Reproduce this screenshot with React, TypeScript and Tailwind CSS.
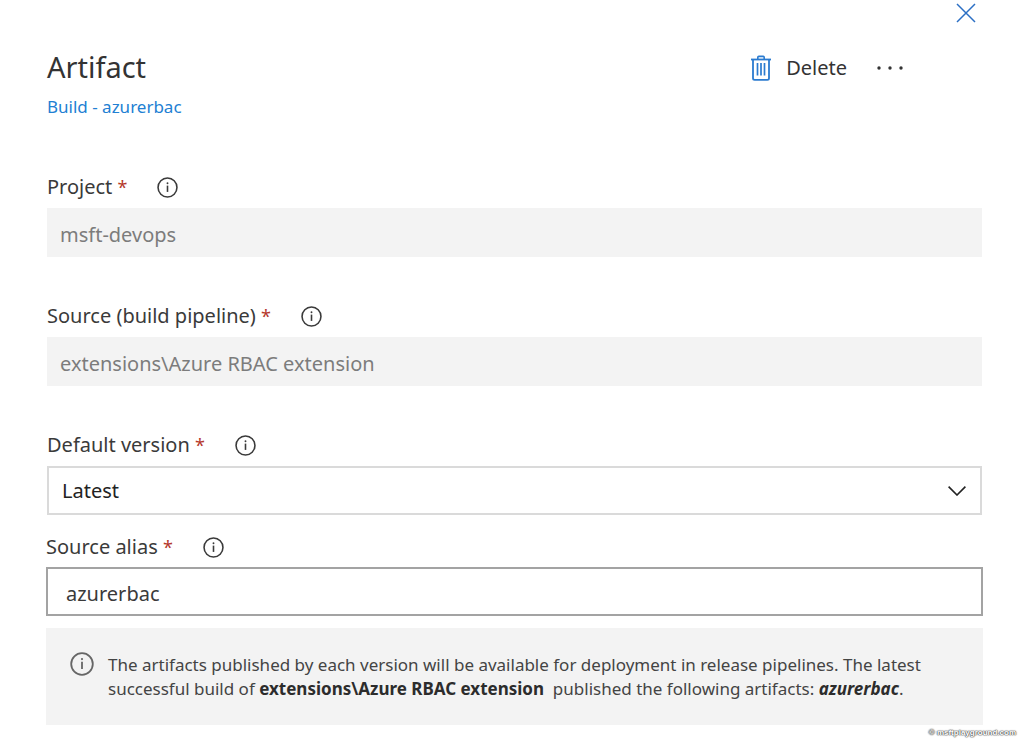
import type { ReactNode } from "react";

function InfoIcon({ className }: { className: string }) {
  return (
    <svg viewBox="0 0 20 20" className={className} fill="none" stroke="currentColor" aria-hidden="true">
      <circle cx="10" cy="10" r="9" strokeWidth="1.5" />
      <path d="M10 8.2v6" strokeWidth="1.5" />
      <circle cx="10" cy="5.9" r="0.9" fill="currentColor" stroke="none" />
    </svg>
  );
}

function TrashIcon() {
  return (
    <svg viewBox="0 0 20 26" className="h-[26px] w-5 text-[#2b7bd0]" fill="none" stroke="currentColor" aria-hidden="true">
      <path d="M0 4.5h20" strokeWidth="1.8" />
      <path d="M6.8 4.2V2.4q0-1 1-1h4.4q1 0 1 1v1.8" strokeWidth="1.6" />
      <path d="M2 4.5v18.700q0 1.600 1.600 1.600h12.800q1.600 0 1.600-1.600V4.500" strokeWidth="1.8" />
      <path d="M6.500 8v12.500M10 8v12.500M13.500 8v12.500" strokeWidth="1.7" />
    </svg>
  );
}

function Field({ id, label, className, children }: { id: string; label: string; className: string; children: ReactNode }) {
  return (
    <div className={className}>
      <div className="flex h-8 items-center gap-[30px] text-[#3a3a3a]">
        <label htmlFor={id} className="text-xl leading-8">
          {label} <span className="text-lg text-[#b5382c]">*</span>
        </label>
        <button type="button" aria-label={`About ${label}`}>
          <InfoIcon className="size-[21px]" />
        </button>
      </div>
      {children}
    </div>
  );
}

export default function App() {
  return (
    <main className="bg-white font-['Noto_Sans','Open_Sans',sans-serif] text-[#333]">
      <div className="flex h-[26px] items-center justify-end pr-12">
        <button type="button" aria-label="Close" className="text-[#2b6fc4]">
          <svg viewBox="0 0 20 20" className="size-5" fill="none" stroke="currentColor" strokeWidth="1.5" aria-hidden="true">
            <path d="M1 1l18 18M19 1L1 19" />
          </svg>
        </button>
      </div>

      <header className="flex justify-between pt-[17px] pr-[120px] pl-[47px]">
        <div>
          <h1 className="text-[29px] leading-12">Artifact</h1>
          <a href="#build" className="block text-[17px] leading-8 text-[#2180d3]">
            Build - azurerbac
          </a>
        </div>
        <div className="flex h-[50px] items-center gap-[29px]">
          <button type="button" className="flex items-center gap-[15px] text-xl">
            <TrashIcon />
            Delete
          </button>
          <button type="button" aria-label="More actions">
            <svg viewBox="0 0 28 6" className="h-[6px] w-7" fill="currentColor" aria-hidden="true">
              <circle cx="3" cy="3" r="1.7" />
              <circle cx="14" cy="3" r="1.7" />
              <circle cx="25" cy="3" r="1.7" />
            </svg>
          </button>
        </div>
      </header>

      <form className="pt-12 pr-[41px] pl-[46px]">
        <Field id="project" label="Project" className="px-px">
          <input
            id="project"
            disabled
            defaultValue="msft-devops"
            className="mt-[5px] block h-[49px] w-full bg-[#f3f3f3] px-[13px] pt-1 text-xl text-[#7c7c7c]"
          />
        </Field>
        <Field id="source" label="Source (build pipeline)" className="px-px pt-[43px]">
          <input
            id="source"
            disabled
            defaultValue="extensions\Azure RBAC extension"
            className="mt-[5px] block h-[49px] w-full bg-[#f3f3f3] px-[13px] pt-1 text-xl text-[#7c7c7c]"
          />
        </Field>
        <Field id="version" label="Default version" className="px-px pt-[43px]">
          <div className="mt-[5px] grid items-center">
            <select
              id="version"
              className="col-start-1 row-start-1 h-[49px] w-full appearance-none border-2 border-[#dadada] bg-white px-[13px] text-xl text-[#222]"
            >
              <option>Latest</option>
            </select>
            <svg
              viewBox="0 0 18 10"
              className="pointer-events-none col-start-1 row-start-1 mr-4 h-[10px] w-[18px] justify-self-end"
              fill="none"
              stroke="#222"
              strokeWidth="1.6"
              aria-hidden="true"
            >
              <path d="M0.6 0.6L9 9l8.400-8.400" />
            </svg>
          </div>
        </Field>
        <Field id="alias" label="Source alias" className="pt-4">
          <input
            id="alias"
            defaultValue="azurerbac"
            className="mt-1 block h-[49px] w-full border-2 border-[#a3a3a3] bg-white px-[18px] pt-1 text-xl text-[#3a3a3a]"
          />
        </Field>
        <section className="mt-3 flex gap-[14px] bg-[#f3f3f3] px-6 py-6">
          <InfoIcon className="size-6 shrink-0 text-[#666]" />
          <p className="pt-px text-[17px] leading-6 text-[#444]">
            The artifacts published by each version will be available for deployment in release pipelines. The latest
            successful build of <strong className="text-[#2c2c2c]">extensions\Azure RBAC extension</strong>&nbsp; published the
            following artifacts: <strong className="text-[#2c2c2c] italic">azurerbac</strong>.
          </p>
        </section>
      </form>

      <footer className="flex justify-end pr-2 font-['Liberation_Sans',sans-serif] text-[8px] leading-4 font-bold text-white [text-shadow:0_0_1px_#555,0_0_1px_#555,0_0_1px_#555,0_0_2px_#888]">
        © msftplayground.com
      </footer>
    </main>
  );
}
